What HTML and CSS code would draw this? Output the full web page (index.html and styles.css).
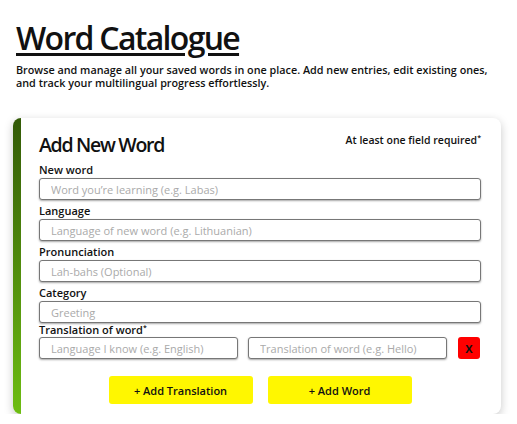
FILE: index.html
```html
<!DOCTYPE html>
<html>
<head>
<meta charset="utf-8">
<link rel="stylesheet" href="styles.css">
</head>
<body>
<header class="intro">
  <h1 class="title">Word Catalogue</h1>
  <p class="lead">Browse and manage all your saved words in one place. Add new entries, edit existing ones, and track your multilingual progress effortlessly.</p>
</header>
<section class="card">
  <div class="card-head">
    <h2 class="card-title">Add New Word</h2>
    <span class="note">At least one field required<sup>*</sup></span>
  </div>
  <div class="field">
    <label class="label">New word</label>
    <input class="input" placeholder="Word you’re learning (e.g. Labas)">
  </div>
  <div class="field">
    <label class="label">Language</label>
    <input class="input" placeholder="Language of new word (e.g. Lithuanian)">
  </div>
  <div class="field">
    <label class="label">Pronunciation</label>
    <input class="input" placeholder="Lah-bahs (Optional)">
  </div>
  <div class="field">
    <label class="label">Category</label>
    <input class="input" placeholder="Greeting">
  </div>
  <div class="field field-trans">
    <label class="label">Translation of word<sup>*</sup></label>
    <div class="trans-row">
      <input class="input" placeholder="Language I know (e.g. English)">
      <input class="input" placeholder="Translation of word (e.g. Hello)">
      <button class="remove">X</button>
    </div>
  </div>
  <div class="actions">
    <button class="btn">+ Add Translation</button>
    <button class="btn">+ Add Word</button>
  </div>
</section>
</body>
</html>
```
FILE: styles.css
```css
* { box-sizing: border-box; }
body {
  margin: 0;
  padding: 20px 16px 0 13px;
  font-family: "Open Sans", "DejaVu Sans", sans-serif;
  color: #111;
  background: #fff;
}
.intro { padding-left: 3px; }
.title {
  margin: 0;
  font-size: 32px;
  font-weight: 600;
  letter-spacing: -1.7px;
  line-height: 36px;
  text-decoration: underline;
  text-decoration-thickness: 3px;
  text-underline-offset: 3px;
}
.lead {
  margin: 7px 0 0;
  font-size: 10.8px;
  font-weight: 600;
  line-height: 13px;
  max-width: 485px;
}
.card {
  margin-top: 29px;
  width: 488px;
  background: #fff;
  border-radius: 8px;
  position: relative;
  box-shadow: 0 3px 10px rgba(0,0,0,0.22);
  padding: 14px 20px 10px 26px;
  overflow: hidden;
}
.card::before {
  content: "";
  position: absolute;
  left: 0; top: 0; bottom: 0; width: 8px;
  background: linear-gradient(#335a07, #6dbd12);
}
.card-head {
  display: flex;
  justify-content: space-between;
  align-items: flex-start;
  margin-bottom: 5px;
}
.card-title {
  margin: 0;
  font-size: 19.5px;
  font-weight: 600;
  letter-spacing: -1.3px;
  line-height: 26px;
}
.note { font-size: 10.5px; font-weight: 600; margin-top: 1px; }
sup { font-size: 7px; vertical-align: 4px; line-height: 0; }
.field { margin-bottom: 4px; }
.label {
  display: block;
  font-size: 11px;
  font-weight: 600;
  line-height: 14px;
  margin-bottom: 1px;
}
.input {
  display: block;
  width: 100%;
  height: 22px;
  border: 1px solid #777;
  border-radius: 3px;
  box-shadow: 0 1px 2px rgba(0,0,0,0.35);
  padding: 0 11px;
  font-family: inherit;
  font-size: 11px;
  color: #111;
  background: #fff;
}
.input::placeholder { color: #aaa; }
.field-trans { margin-top: -4px; }
.field-trans .label { margin-bottom: 0; }
.trans-row {
  display: flex;
  gap: 10px;
  align-items: center;
}
.trans-row .input { width: 199px; flex: none; }
.remove {
  margin-left: 1px;
  width: 22px; height: 22px;
  border: 0;
  border-radius: 3px;
  background: #f00;
  color: #111;
  font-family: inherit;
  font-weight: 700;
  font-size: 11px;
  padding: 0;
}
.actions {
  display: flex;
  justify-content: center;
  gap: 15px;
  margin-top: 17px;
}
.btn {
  width: 144px;
  height: 28px;
  border: 0;
  border-radius: 3px;
  background: #fff700;
  font-family: inherit;
  font-size: 11px;
  font-weight: 600;
  color: #111;
}
```
